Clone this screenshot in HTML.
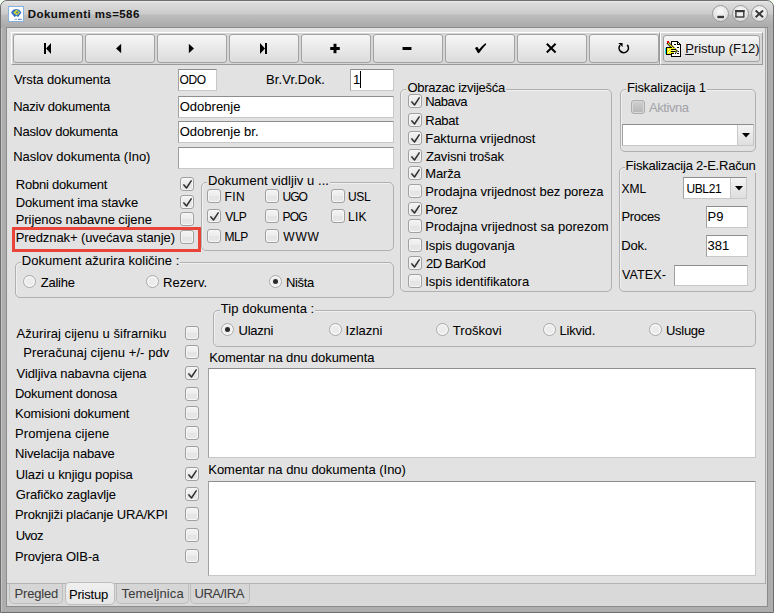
<!DOCTYPE html><html><head><meta charset="utf-8"><style>
html,body{margin:0;padding:0;width:774px;height:613px;overflow:hidden;background:#fff;}
.corner{position:absolute;top:0;width:8px;height:8px;background:#f0fbee;}
*{box-sizing:border-box;}
body{font-family:"Liberation Sans", sans-serif;position:relative;}
.t{position:absolute;white-space:nowrap;-webkit-text-stroke:0.05px currentColor;}
.cb{position:absolute;width:14px;height:14px;border:1px solid #a0a0a0;border-radius:3px;background:linear-gradient(#f4f4f4 0%,#ececec 48%,#e4e4e4 52%,#e8e8e8 100%);box-shadow:inset 0 0 0 1px #f6f6f6;}
.cb.dis{background:linear-gradient(#d0d0d0,#b6b6b6);border-color:#acacac;box-shadow:inset 0 0 0 1px #d8d8d8;}
.rb{position:absolute;width:13px;height:13px;border:1px solid #aaa;border-radius:50%;background:#ececec;box-shadow:inset 0 0 0 1.5px #f8f8f8;}
.rb .dot{position:absolute;left:3px;top:3px;width:5px;height:5px;border-radius:50%;background:#2a2a2a;}
.inp{position:absolute;background:#fff;border-top:1px solid #8e8e8e;border-left:1px solid #a0a0a0;border-right:1px solid #c8c8c8;border-bottom:1px solid #c8c8c8;}
.grp{position:absolute;border:1px solid #b0b0b0;border-radius:5px;box-shadow:inset 1px 1px 0 #f0f0f0;}
.btn{position:absolute;border:1px solid #a2a2a2;border-radius:3px;background:linear-gradient(#f6f6f6 0%,#eaeaea 45%,#dcdcdc 100%);}
</style></head><body>
<div class="corner" style="left:0"></div><div class="corner" style="right:0"></div>
<div style="position:absolute;left:0px;top:0px;width:774px;height:613px;background:#adadad;border:1px solid #6e6e6e;border-radius:7px 7px 0 0;"></div>
<div style="position:absolute;left:1px;top:28px;width:1px;height:584px;background:#c4c4c4;"></div>
<div style="position:absolute;left:1px;top:1px;width:772px;height:26px;border-radius:6px 6px 0 0;background:linear-gradient(#ececec 0px,#dcdcdc 2px,#cbcbcb 13px,#bdbdbd 14px,#aaaaaa 26px);"></div>
<div style="position:absolute;left:6px;top:27px;width:762px;height:580px;background:#8c8c8c;"></div>
<div style="position:absolute;left:7px;top:28px;width:760px;height:578px;background:#e2e2e2;"></div>
<div style="position:absolute;left:7px;top:583px;width:760px;height:23px;background:#d9d9d9;"></div>
<div style="position:absolute;left:7px;top:583px;width:759px;height:1px;background:#b2b2b2;"></div>
<div style="position:absolute;left:765px;top:28px;width:1px;height:556px;background:#a8a8a8;"></div>
<div style="position:absolute;left:766px;top:28px;width:1px;height:578px;background:#d4d4d4;"></div>
<div style="position:absolute;left:8px;top:6px;width:16px;height:16px;background:#fff;border:1px solid #86b2e2;"></div>
<svg style="position:absolute;left:8.8px;top:7px" width="16" height="16" viewBox="0 0 16 16"><polygon points="7.2,2 10.2,2.8 12.4,5.6 10.2,8.6 7.2,9.2 4.2,8.6 2,5.6 4.2,2.8" fill="#2f6fd0"/><polygon points="7.6,2.6 11,5.6 7.6,8.4 4.2,5.6" fill="#c8d434"/><circle cx="8.2" cy="5.4" r="0.9" fill="#2a66c8"/><path d="M5 8.2 L6 9.8 M9.6 8.2 L8.6 9.8" stroke="#1f58b8" stroke-width="1.2"/><rect x="5.4" y="11.8" width="2.6" height="1.1" fill="#8cb0e0"/><rect x="9" y="11.8" width="3.8" height="1.1" fill="#5a88d0"/></svg>
<div class="t" id="title" style="left:27.80px;top:7.70px;font-size:11.5px;line-height:13px;color:#101010;letter-spacing:0.427px;font-weight:bold;">Dokumenti ms=586</div>
<div style="position:absolute;left:712.1px;top:5px;width:17px;height:17px;border-radius:50%;border:1px solid #9a9a9a;background:radial-gradient(circle at 50% 35%,#fafafa,#dcdcdc 80%);"></div>
<div style="position:absolute;left:731.5px;top:5px;width:17px;height:17px;border-radius:50%;border:1px solid #9a9a9a;background:radial-gradient(circle at 50% 35%,#fafafa,#dcdcdc 80%);"></div>
<div style="position:absolute;left:750.8px;top:5px;width:17px;height:17px;border-radius:50%;border:1px solid #9a9a9a;background:radial-gradient(circle at 50% 35%,#fafafa,#dcdcdc 80%);"></div>
<svg style="position:absolute;left:0;top:0" width="774" height="28"><rect x="717.4" y="15.8" width="6.6" height="2.3" fill="#383838"/><rect x="735.9" y="10.7" width="7.9" height="6.3" fill="none" stroke="#383838" stroke-width="1.4"/><rect x="735.2" y="10" width="9.3" height="2.2" fill="#383838"/><path d="M755.6 10.6 L763 17.2 M763 10.6 L755.6 17.2" stroke="#383838" stroke-width="2" /></svg>
<div style="position:absolute;left:11px;top:32px;width:649px;height:33px;background:#d6d6d6;border-top:1px solid #fff;border-left:1px solid #fff;border-bottom:1px solid #9a9a9a;border-right:1px solid #9a9a9a;"></div>
<div style="position:absolute;left:660px;top:32px;width:103px;height:33px;background:#d6d6d6;border-top:1px solid #fff;border-left:1px solid #fff;border-bottom:1px solid #9a9a9a;border-right:1px solid #9a9a9a;"></div>
<div class="btn" style="left:13px;top:34px;width:70px;height:29px"></div>
<div class="btn" style="left:85px;top:34px;width:70px;height:29px"></div>
<div class="btn" style="left:157px;top:34px;width:70px;height:29px"></div>
<div class="btn" style="left:229px;top:34px;width:70px;height:29px"></div>
<div class="btn" style="left:301px;top:34px;width:70px;height:29px"></div>
<div class="btn" style="left:373px;top:34px;width:70px;height:29px"></div>
<div class="btn" style="left:445px;top:34px;width:70px;height:29px"></div>
<div class="btn" style="left:517px;top:34px;width:70px;height:29px"></div>
<div class="btn" style="left:589px;top:34px;width:70px;height:29px"></div>
<div class="btn" style="left:663px;top:35px;width:97px;height:27px"></div>
<svg style="position:absolute;left:0;top:0;filter:drop-shadow(0 0 0.6px #fff) drop-shadow(0 0 0.6px #fff)" width="774" height="70" fill="#000">
<path d="M44 43 h2 v11 h-2z M46 48.5 L51 43 L51 54z"/>
<path d="M121.2 43.8 L116 48.5 L121.2 53.2z"/>
<path d="M188.8 43.8 L194 48.5 L188.8 53.2z"/>
<path d="M260 43 L265 48.5 L260 54z M265 43 h2 v11 h-2z"/>
<path d="M333.5 43.8 h3 v3.2 h3.3 v3 h-3.3 v3.3 h-3 v-3.3 h-3.3 v-3 h3.3z"/>
<rect x="402.5" y="47" width="9" height="3"/>
<path d="M475 48.2 Q476.3 46.6 477.8 47.3 L478.9 49.6 Q482 45.6 485.3 43.2 Q486.4 43.4 486.2 44.4 Q482.4 48.2 479.6 52.6 Q478.6 53.6 477.6 52.8 Q476.6 50.4 475 48.2z"/>
<path d="M546.8 43.8 L555.6 52.6 M555.6 43.8 L546.8 52.6" stroke="#000" stroke-width="2.1"/>
<path d="M627.2 44.9 A4.65 4.65 0 1 1 620 45.2" fill="none" stroke="#000" stroke-width="1.7"/>
<path d="M618.2 43 L622.6 43 L622.6 46.9z"/>
</svg>
<svg style="position:absolute;left:662px;top:38px" width="22" height="22" viewBox="0 0 22 22" shape-rendering="crispEdges">
<path d="M9.5 3.5 h6 l3 3 v12 h-9z" fill="#fff" stroke="#000" stroke-width="1"/>
<path d="M15.5 3.5 v3 h3" fill="none" stroke="#000" stroke-width="1"/>
<rect x="12" y="6" width="2" height="1" fill="#000"/><rect x="15" y="9" width="2" height="1" fill="#000"/>
<rect x="13" y="15" width="1" height="1" fill="#000"/><rect x="15" y="15" width="2" height="1" fill="#000"/><rect x="16" y="13" width="1" height="1" fill="#000"/>
<path d="M5.5 4.5 L15 14" stroke="#000" stroke-width="2.6" shape-rendering="auto"/>
<path d="M6 5 L14.5 13.5" stroke="#f0e020" stroke-width="1.1" shape-rendering="auto"/>
<rect x="5" y="3" width="2" height="2" fill="#e00000"/>
<rect x="5" y="9" width="5" height="7" fill="#f4f000"/>
<rect x="5" y="9" width="5" height="1" fill="#000"/>
<rect x="9" y="10" width="4" height="1" fill="#f4f000"/><rect x="9" y="11" width="5" height="1" fill="#000"/>
<rect x="9" y="12" width="4" height="1" fill="#f8f8a0"/><rect x="9" y="13" width="4" height="1" fill="#000"/>
<rect x="9" y="14" width="3" height="1" fill="#f4f000"/><rect x="9" y="15" width="3" height="1" fill="#000"/>
<rect x="6" y="11" width="1" height="1" fill="#fff"/><rect x="7" y="13" width="1" height="1" fill="#fff"/><rect x="6" y="14" width="1" height="1" fill="#fff"/>
<rect x="5" y="16" width="5" height="1" fill="#000"/>
<rect x="3" y="10" width="1" height="6" fill="#20e0f0"/>
<rect x="4" y="9" width="1" height="8" fill="#000"/>
</svg>
<div class="t" id="pristup" style="left:685.32px;top:41.20px;font-size:13px;line-height:15px;color:#101010;letter-spacing:-0.080px;"><u>P</u>ristup (F12)</div>
<div class="t" id="t2" style="left:14.04px;top:72.20px;font-size:13px;line-height:15px;color:#000;letter-spacing:-0.103px;">Vrsta dokumenta</div>
<div class="t" id="t3" style="left:13.24px;top:99.20px;font-size:13px;line-height:15px;color:#000;letter-spacing:-0.251px;">Naziv dokumenta</div>
<div class="t" id="t4" style="left:13.24px;top:124.20px;font-size:13px;line-height:15px;color:#000;letter-spacing:-0.203px;">Naslov dokumenta</div>
<div class="t" id="t5" style="left:13.24px;top:149.20px;font-size:13px;line-height:15px;color:#000;letter-spacing:-0.038px;">Naslov dokumenta (Ino)</div>
<div class="inp" style="left:178px;top:69px;width:39px;height:22px"></div>
<div class="t" id="t6" style="left:179.50px;top:73.03px;font-size:12px;line-height:14px;color:#000;letter-spacing:-0.320px;">ODO</div>
<div class="t" id="t7" style="left:266.00px;top:72.20px;font-size:13px;line-height:15px;color:#000;letter-spacing:0.089px;">Br.Vr.Dok.</div>
<div class="inp" style="left:350px;top:69px;width:44px;height:22px"></div>
<div class="t" id="one" style="left:353.00px;top:72.20px;font-size:13px;line-height:15px;color:#000;letter-spacing:0.000px;">1</div>
<div style="position:absolute;left:360px;top:71px;width:1px;height:17px;background:#000;"></div>
<div class="inp" style="left:178px;top:96px;width:216px;height:22px"></div>
<div class="t" id="t9" style="left:179.76px;top:99.20px;font-size:13px;line-height:15px;color:#000;letter-spacing:0.000px;">Odobrenje</div>
<div class="inp" style="left:178px;top:121px;width:216px;height:22px"></div>
<div class="t" id="t10" style="left:179.76px;top:124.20px;font-size:13px;line-height:15px;color:#000;letter-spacing:0.000px;">Odobrenje br.</div>
<div class="inp" style="left:178px;top:147px;width:216px;height:22px"></div>
<div class="t" id="t11" style="left:15.76px;top:177.20px;font-size:13px;line-height:15px;color:#000;letter-spacing:-0.234px;">Robni dokument</div>
<div class="cb" style="left:180px;top:177px"><svg width="14" height="14" viewBox="0 0 14 14" style="position:absolute;left:-1px;top:-1px"><path d="M3.9 7.9 L6.5 11 L11.2 3.9" fill="none" stroke="#303030" stroke-width="1.5" stroke-linecap="round" stroke-linejoin="round"/></svg></div>
<div class="t" id="t12" style="left:15.76px;top:195.20px;font-size:13px;line-height:15px;color:#000;letter-spacing:-0.142px;">Dokument ima stavke</div>
<div class="cb" style="left:180px;top:195px"><svg width="14" height="14" viewBox="0 0 14 14" style="position:absolute;left:-1px;top:-1px"><path d="M3.9 7.9 L6.5 11 L11.2 3.9" fill="none" stroke="#303030" stroke-width="1.5" stroke-linecap="round" stroke-linejoin="round"/></svg></div>
<div class="t" id="t13" style="left:15.76px;top:212.20px;font-size:13px;line-height:15px;color:#000;letter-spacing:-0.087px;">Prijenos nabavne cijene</div>
<div class="cb" style="left:180px;top:212px"></div>
<div class="t" id="t14" style="left:15.76px;top:230.20px;font-size:13px;line-height:15px;color:#000;letter-spacing:-0.090px;">Predznak+ (uvećava stanje)</div>
<div class="cb" style="left:180px;top:230px"></div>
<div style="position:absolute;left:12px;top:227px;width:189px;height:25px;border:3px solid #e8443a;"></div>
<div class="grp" style="left:201px;top:182px;width:193px;height:69px"></div>
<div class="t" id="t15" style="left:208.00px;top:173.20px;font-size:13px;line-height:15px;color:#000;letter-spacing:0.046px;background:#e2e2e2;padding:0 1px;margin-left:-1px;">Dokument vidljiv u ...</div>
<div class="cb" style="left:207px;top:189px"></div>
<div class="t" id="t16" style="left:224.50px;top:190.03px;font-size:12px;line-height:14px;color:#000;letter-spacing:0.400px;">FIN</div>
<div class="cb" style="left:265px;top:189px"></div>
<div class="t" id="t17" style="left:282.52px;top:190.03px;font-size:12px;line-height:14px;color:#000;letter-spacing:-0.960px;">UGO</div>
<div class="cb" style="left:331px;top:189px"></div>
<div class="t" id="t18" style="left:348.00px;top:190.03px;font-size:12px;line-height:14px;color:#000;letter-spacing:-0.320px;">USL</div>
<div class="cb" style="left:207px;top:209px"><svg width="14" height="14" viewBox="0 0 14 14" style="position:absolute;left:-1px;top:-1px"><path d="M3.9 7.9 L6.5 11 L11.2 3.9" fill="none" stroke="#303030" stroke-width="1.5" stroke-linecap="round" stroke-linejoin="round"/></svg></div>
<div class="t" id="t19" style="left:225.30px;top:210.03px;font-size:12px;line-height:14px;color:#000;letter-spacing:-0.640px;">VLP</div>
<div class="cb" style="left:265px;top:209px"></div>
<div class="t" id="t20" style="left:282.52px;top:210.03px;font-size:12px;line-height:14px;color:#000;letter-spacing:-0.800px;">POG</div>
<div class="cb" style="left:331px;top:209px"></div>
<div class="t" id="t21" style="left:348.00px;top:210.03px;font-size:12px;line-height:14px;color:#000;letter-spacing:0.240px;">LIK</div>
<div class="cb" style="left:207px;top:229px"></div>
<div class="t" id="t22" style="left:224.50px;top:230.03px;font-size:12px;line-height:14px;color:#000;letter-spacing:-0.400px;">MLP</div>
<div class="cb" style="left:265px;top:229px"></div>
<div class="t" id="t23" style="left:283.32px;top:230.03px;font-size:12px;line-height:14px;color:#000;letter-spacing:0.800px;">WWW</div>
<div class="grp" style="left:15px;top:262px;width:379px;height:36px"></div>
<div class="t" id="t24" style="left:21.84px;top:253.20px;font-size:13px;line-height:15px;color:#000;letter-spacing:0.025px;background:#e2e2e2;padding:0 1px;margin-left:-1px;">Dokument ažurira količine :</div>
<div class="rb" style="left:23px;top:275px"></div>
<div class="t" id="t25" style="left:40.78px;top:275.20px;font-size:13px;line-height:15px;color:#000;letter-spacing:-0.256px;">Zalihe</div>
<div class="rb" style="left:146px;top:275px"></div>
<div class="t" id="t26" style="left:162.98px;top:275.20px;font-size:13px;line-height:15px;color:#000;letter-spacing:0.053px;">Rezerv.</div>
<div class="rb" style="left:269px;top:275px"><div class="dot"></div></div>
<div class="t" id="t27" style="left:285.98px;top:275.20px;font-size:13px;line-height:15px;color:#000;letter-spacing:-0.320px;">Ništa</div>
<div class="grp" style="left:400px;top:89px;width:212px;height:203px"></div>
<div class="t" id="t28" style="left:407.44px;top:80.20px;font-size:13px;line-height:15px;color:#000;letter-spacing:-0.252px;background:#e2e2e2;padding:0 1px;margin-left:-1px;">Obrazac izviješća</div>
<div class="cb" style="left:408px;top:94px"><svg width="14" height="14" viewBox="0 0 14 14" style="position:absolute;left:-1px;top:-1px"><path d="M3.9 7.9 L6.5 11 L11.2 3.9" fill="none" stroke="#303030" stroke-width="1.5" stroke-linecap="round" stroke-linejoin="round"/></svg></div>
<div class="t" id="t29" style="left:425.24px;top:94.20px;font-size:13px;line-height:15px;color:#000;letter-spacing:-0.512px;">Nabava</div>
<div class="cb" style="left:408px;top:113px"><svg width="14" height="14" viewBox="0 0 14 14" style="position:absolute;left:-1px;top:-1px"><path d="M3.9 7.9 L6.5 11 L11.2 3.9" fill="none" stroke="#303030" stroke-width="1.5" stroke-linecap="round" stroke-linejoin="round"/></svg></div>
<div class="t" id="t30" style="left:425.24px;top:113.20px;font-size:13px;line-height:15px;color:#000;letter-spacing:-0.240px;">Rabat</div>
<div class="cb" style="left:408px;top:131px"><svg width="14" height="14" viewBox="0 0 14 14" style="position:absolute;left:-1px;top:-1px"><path d="M3.9 7.9 L6.5 11 L11.2 3.9" fill="none" stroke="#303030" stroke-width="1.5" stroke-linecap="round" stroke-linejoin="round"/></svg></div>
<div class="t" id="t31" style="left:425.24px;top:131.20px;font-size:13px;line-height:15px;color:#000;letter-spacing:-0.018px;">Fakturna vrijednost</div>
<div class="cb" style="left:408px;top:149px"><svg width="14" height="14" viewBox="0 0 14 14" style="position:absolute;left:-1px;top:-1px"><path d="M3.9 7.9 L6.5 11 L11.2 3.9" fill="none" stroke="#303030" stroke-width="1.5" stroke-linecap="round" stroke-linejoin="round"/></svg></div>
<div class="t" id="t32" style="left:426.04px;top:149.20px;font-size:13px;line-height:15px;color:#000;letter-spacing:-0.172px;">Zavisni trošak</div>
<div class="cb" style="left:408px;top:166px"><svg width="14" height="14" viewBox="0 0 14 14" style="position:absolute;left:-1px;top:-1px"><path d="M3.9 7.9 L6.5 11 L11.2 3.9" fill="none" stroke="#303030" stroke-width="1.5" stroke-linecap="round" stroke-linejoin="round"/></svg></div>
<div class="t" id="t33" style="left:425.24px;top:166.20px;font-size:13px;line-height:15px;color:#000;letter-spacing:-0.160px;">Marža</div>
<div class="cb" style="left:408px;top:184px"></div>
<div class="t" id="t34" style="left:425.24px;top:184.20px;font-size:13px;line-height:15px;color:#000;letter-spacing:-0.033px;">Prodajna vrijednost bez poreza</div>
<div class="cb" style="left:408px;top:202px"><svg width="14" height="14" viewBox="0 0 14 14" style="position:absolute;left:-1px;top:-1px"><path d="M3.9 7.9 L6.5 11 L11.2 3.9" fill="none" stroke="#303030" stroke-width="1.5" stroke-linecap="round" stroke-linejoin="round"/></svg></div>
<div class="t" id="t35" style="left:425.24px;top:202.20px;font-size:13px;line-height:15px;color:#000;letter-spacing:-0.360px;">Porez</div>
<div class="cb" style="left:408px;top:219px"></div>
<div class="t" id="t36" style="left:425.24px;top:219.20px;font-size:13px;line-height:15px;color:#000;letter-spacing:0.022px;">Prodajna vrijednost sa porezom</div>
<div class="cb" style="left:408px;top:238px"></div>
<div class="t" id="t37" style="left:425.24px;top:237.70px;font-size:13px;line-height:15px;color:#000;letter-spacing:-0.069px;">Ispis dugovanja</div>
<div class="cb" style="left:408px;top:256px"><svg width="14" height="14" viewBox="0 0 14 14" style="position:absolute;left:-1px;top:-1px"><path d="M3.9 7.9 L6.5 11 L11.2 3.9" fill="none" stroke="#303030" stroke-width="1.5" stroke-linecap="round" stroke-linejoin="round"/></svg></div>
<div class="t" id="t38" style="left:426.04px;top:256.20px;font-size:13px;line-height:15px;color:#000;letter-spacing:-0.500px;">2D BarKod</div>
<div class="cb" style="left:408px;top:274px"></div>
<div class="t" id="t39" style="left:425.24px;top:274.20px;font-size:13px;line-height:15px;color:#000;letter-spacing:-0.008px;">Ispis identifikatora</div>
<div class="grp" style="left:620px;top:89px;width:136px;height:63px"></div>
<div class="t" id="t40" style="left:626.88px;top:80.20px;font-size:13px;line-height:15px;color:#000;letter-spacing:-0.126px;background:#e2e2e2;padding:0 1px;margin-left:-1px;">Fiskalizacija 1</div>
<div class="cb dis" style="left:631px;top:100px"></div>
<div class="t" id="t41" style="left:649.06px;top:100.20px;font-size:13px;line-height:15px;color:#a4a4ac;letter-spacing:-0.453px;">Aktivna</div>
<div class="inp" style="left:622px;top:124px;width:132px;height:22px"></div>
<div style="position:absolute;left:737px;top:125px;width:16px;height:20px;background:linear-gradient(#f4f4f4,#dedede);border-left:1px solid #c8c8c8;"></div>
<svg style="position:absolute;left:742px;top:132.5px" width="10" height="6"><path d="M0 0 h8 L4 4.5z" fill="#000"/></svg>
<div class="grp" style="left:619px;top:167px;width:137px;height:125px"></div>
<div class="t" id="t42" style="left:625.50px;top:158.20px;font-size:13px;line-height:15px;color:#000;letter-spacing:-0.225px;background:#e2e2e2;padding:0 1px;margin-left:-1px;">Fiskalizacija 2-E.Račun</div>
<div class="t" id="t43" style="left:621.52px;top:182.03px;font-size:12px;line-height:14px;color:#000;letter-spacing:0.000px;">XML</div>
<div class="inp" style="left:683px;top:177px;width:64px;height:22px"></div>
<div style="position:absolute;left:730px;top:178px;width:16px;height:20px;background:linear-gradient(#f4f4f4,#dedede);border-left:1px solid #c8c8c8;"></div>
<svg style="position:absolute;left:735px;top:185.5px" width="10" height="6"><path d="M0 0 h8 L4 4.5z" fill="#000"/></svg>
<div class="t" id="t44" style="left:686.50px;top:182.03px;font-size:12px;line-height:14px;color:#000;letter-spacing:-0.400px;">UBL21</div>
<div class="t" id="t45" style="left:621.50px;top:209.20px;font-size:13px;line-height:15px;color:#000;letter-spacing:-0.320px;">Proces</div>
<div class="inp" style="left:706px;top:206px;width:42px;height:22px"></div>
<div class="t" id="t46" style="left:707.52px;top:209.20px;font-size:13px;line-height:15px;color:#000;letter-spacing:0.000px;">P9</div>
<div class="t" id="t47" style="left:621.24px;top:238.20px;font-size:13px;line-height:15px;color:#000;letter-spacing:-0.213px;">Dok.</div>
<div class="inp" style="left:706px;top:235px;width:42px;height:22px"></div>
<div class="t" id="t48" style="left:707.52px;top:238.20px;font-size:13px;line-height:15px;color:#000;letter-spacing:0.000px;">381</div>
<div class="t" id="t49" style="left:622.04px;top:267.87px;font-size:12.5px;line-height:14px;color:#000;letter-spacing:0.096px;">VATEX-</div>
<div class="inp" style="left:674px;top:264.5px;width:74px;height:21px"></div>
<div class="grp" style="left:213px;top:310px;width:543px;height:37px"></div>
<div class="t" id="t50" style="left:220.80px;top:301.20px;font-size:13px;line-height:15px;color:#000;letter-spacing:0.046px;background:#e2e2e2;padding:0 1px;margin-left:-1px;">Tip dokumenta :</div>
<div class="rb" style="left:221.3px;top:323px"><div class="dot"></div></div>
<div class="t" id="t51" style="left:238.52px;top:323.20px;font-size:13px;line-height:15px;color:#000;letter-spacing:-0.256px;">Ulazni</div>
<div class="rb" style="left:328.5px;top:323px"></div>
<div class="t" id="t52" style="left:345.50px;top:323.20px;font-size:13px;line-height:15px;color:#000;letter-spacing:0.027px;">Izlazni</div>
<div class="rb" style="left:435.5px;top:323px"></div>
<div class="t" id="t53" style="left:452.80px;top:323.20px;font-size:13px;line-height:15px;color:#000;letter-spacing:0.046px;">Troškovi</div>
<div class="rb" style="left:542.5px;top:323px"></div>
<div class="t" id="t54" style="left:559.52px;top:323.20px;font-size:13px;line-height:15px;color:#000;letter-spacing:-0.187px;">Likvid.</div>
<div class="rb" style="left:649px;top:323px"></div>
<div class="t" id="t55" style="left:666.00px;top:323.20px;font-size:13px;line-height:15px;color:#000;letter-spacing:-0.288px;">Usluge</div>
<div class="t" id="t56" style="left:209.22px;top:350.20px;font-size:13px;line-height:15px;color:#000;letter-spacing:-0.100px;">Komentar na dnu dokumenta</div>
<div class="inp" style="left:208px;top:368px;width:548px;height:90px"></div>
<div class="t" id="t57" style="left:208.24px;top:462.20px;font-size:13px;line-height:15px;color:#000;letter-spacing:-0.011px;">Komentar na dnu dokumenta (Ino)</div>
<div class="inp" style="left:208px;top:480.5px;width:548px;height:95.5px"></div>
<div class="t" id="t58" style="left:16.58px;top:326.20px;font-size:13px;line-height:15px;color:#000;letter-spacing:0.041px;">Ažuriraj cijenu u šifrarniku</div>
<div class="cb" style="left:185px;top:326px"></div>
<div class="t" id="t59" style="left:23.24px;top:345.20px;font-size:13px;line-height:15px;color:#000;letter-spacing:0.080px;">Preračunaj cijenu +/- pdv</div>
<div class="cb" style="left:185px;top:345px"></div>
<div class="t" id="t60" style="left:16.58px;top:366.20px;font-size:13px;line-height:15px;color:#000;letter-spacing:-0.095px;">Vidljiva nabavna cijena</div>
<div class="cb" style="left:185px;top:366px"><svg width="14" height="14" viewBox="0 0 14 14" style="position:absolute;left:-1px;top:-1px"><path d="M3.9 7.9 L6.5 11 L11.2 3.9" fill="none" stroke="#303030" stroke-width="1.5" stroke-linecap="round" stroke-linejoin="round"/></svg></div>
<div class="t" id="t61" style="left:14.98px;top:386.20px;font-size:13px;line-height:15px;color:#000;letter-spacing:-0.240px;">Dokument donosa</div>
<div class="cb" style="left:185px;top:387px"></div>
<div class="t" id="t62" style="left:14.98px;top:406.20px;font-size:13px;line-height:15px;color:#000;letter-spacing:-0.151px;">Komisioni dokument</div>
<div class="cb" style="left:185px;top:406px"></div>
<div class="t" id="t63" style="left:14.98px;top:426.20px;font-size:13px;line-height:15px;color:#000;letter-spacing:0.080px;">Promjena cijene</div>
<div class="cb" style="left:185px;top:426px"></div>
<div class="t" id="t64" style="left:14.98px;top:446.20px;font-size:13px;line-height:15px;color:#000;letter-spacing:-0.130px;">Nivelacija nabave</div>
<div class="cb" style="left:185px;top:446px"></div>
<div class="t" id="t65" style="left:15.78px;top:467.20px;font-size:13px;line-height:15px;color:#000;letter-spacing:-0.112px;">Ulazi u knjigu popisa</div>
<div class="cb" style="left:185px;top:467px"><svg width="14" height="14" viewBox="0 0 14 14" style="position:absolute;left:-1px;top:-1px"><path d="M3.9 7.9 L6.5 11 L11.2 3.9" fill="none" stroke="#303030" stroke-width="1.5" stroke-linecap="round" stroke-linejoin="round"/></svg></div>
<div class="t" id="t66" style="left:15.78px;top:487.20px;font-size:13px;line-height:15px;color:#000;letter-spacing:-0.141px;">Grafičko zaglavlje</div>
<div class="cb" style="left:185px;top:487px"><svg width="14" height="14" viewBox="0 0 14 14" style="position:absolute;left:-1px;top:-1px"><path d="M3.9 7.9 L6.5 11 L11.2 3.9" fill="none" stroke="#303030" stroke-width="1.5" stroke-linecap="round" stroke-linejoin="round"/></svg></div>
<div class="t" id="t67" style="left:14.98px;top:507.20px;font-size:13px;line-height:15px;color:#000;letter-spacing:-0.160px;">Proknjiži plaćanje URA/KPI</div>
<div class="cb" style="left:185px;top:507px"></div>
<div class="t" id="t68" style="left:15.78px;top:528.20px;font-size:13px;line-height:15px;color:#000;letter-spacing:-0.640px;">Uvoz</div>
<div class="cb" style="left:185px;top:528px"></div>
<div class="t" id="t69" style="left:14.98px;top:549.20px;font-size:13px;line-height:15px;color:#000;letter-spacing:-0.123px;">Provjera OIB-a</div>
<div class="cb" style="left:185px;top:549px"></div>
<div style="position:absolute;left:9px;top:583.5px;width:54px;height:20px;border:1px solid #bdbdbd;border-top:none;border-radius:0 0 5px 5px;background:#d6d6d6;"></div>
<div class="t" id="t70" style="left:14.50px;top:586.20px;font-size:13px;line-height:15px;color:#3c3c3c;letter-spacing:-0.160px;">Pregled</div>
<div style="position:absolute;left:64.5px;top:581.5px;width:50px;height:23.5px;border:1px solid #bdbdbd;border-radius:4px 4px 5px 5px;background:linear-gradient(#f0f0f0,#e6e6e6);"></div>
<div class="t" id="t71" style="left:68.98px;top:587.20px;font-size:13px;line-height:15px;color:#000;letter-spacing:-0.187px;">Pristup</div>
<div style="position:absolute;left:116px;top:583.5px;width:73px;height:20px;border:1px solid #bdbdbd;border-top:none;border-radius:0 0 5px 5px;background:#d6d6d6;"></div>
<div class="t" id="t72" style="left:121.58px;top:586.20px;font-size:13px;line-height:15px;color:#3c3c3c;letter-spacing:0.071px;">Temeljnica</div>
<div style="position:absolute;left:190px;top:583.5px;width:60px;height:20px;border:1px solid #bdbdbd;border-top:none;border-radius:0 0 5px 5px;background:#d6d6d6;"></div>
<div class="t" id="t73" style="left:194.48px;top:586.20px;font-size:13px;line-height:15px;color:#3c3c3c;letter-spacing:-0.480px;">URA/IRA</div>
</body></html>
